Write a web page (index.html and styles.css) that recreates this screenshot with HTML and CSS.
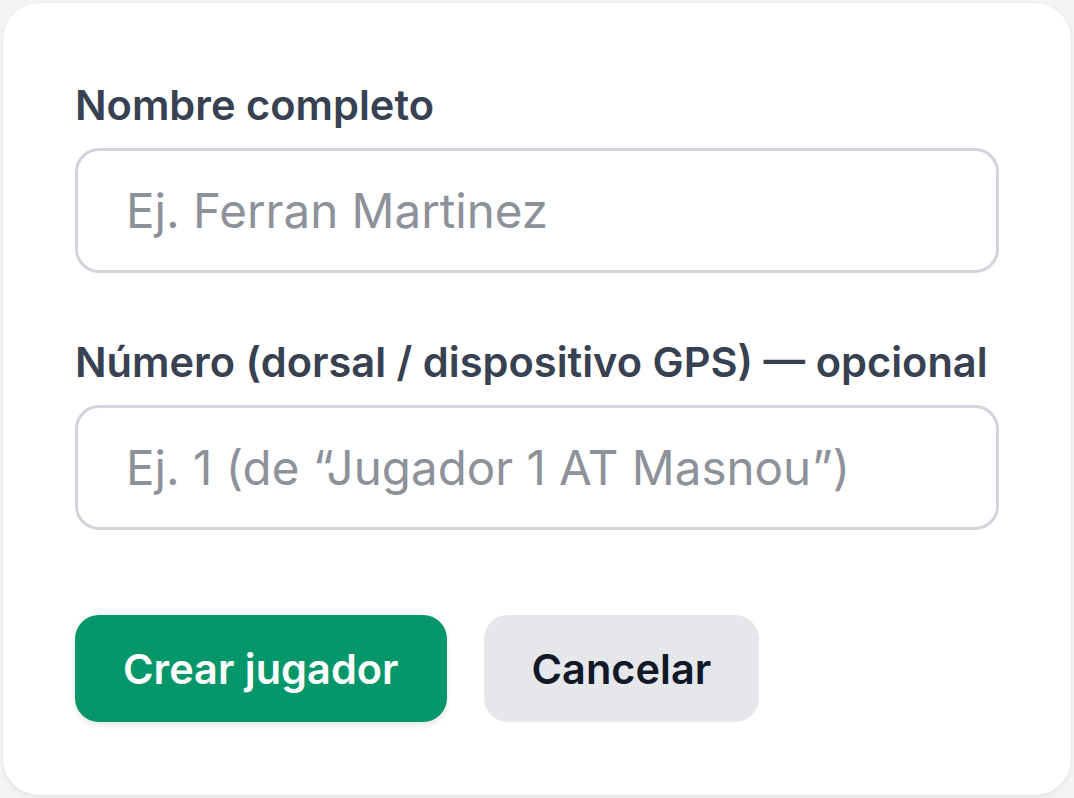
FILE: index.html
```html
<!DOCTYPE html>
<html>
<head>
    <title>Nuevo jugador</title>
    <meta name="viewport" content="width=device-width, initial-scale=1">
    <link rel="stylesheet" href="styles.css">
</head>
<body>
    <div class="card">
        <form class="player-form" onsubmit="return false">
            <div class="field">
                <label class="field-label" for="player-name">Nombre completo</label>
                <input class="field-input" id="player-name" type="text" placeholder="Ej. Ferran Martinez">
            </div>

            <div class="field">
                <label class="field-label" for="player-number">Número (dorsal / dispositivo GPS) — opcional</label>
                <input class="field-input" id="player-number" type="text" placeholder="Ej. 1 (de “Jugador 1 AT Masnou”)">
            </div>

            <div class="actions">
                <button class="btn btn-primary" type="submit">Crear jugador</button>
                <button class="btn btn-secondary" type="button">Cancelar</button>
            </div>
        </form>
    </div>
</body>
</html>
```

FILE: styles.css
```css
* {
    box-sizing: border-box;
}
body {
    font-family: Inter, "Noto Sans", sans-serif;
    margin: 0;
    padding: 3px;
    background: #f3f4f6;
    color: #374151;
}
.card {
    background: white;
    border-radius: 36px;
    box-shadow: 0 3px 6px rgba(0,0,0,0.06), 0 0 0 1px rgba(0,0,0,0.02);
    padding: 72px;
    min-height: 792px;
}
.player-form {
    display: flex;
    flex-direction: column;
}
.field {
    display: flex;
    flex-direction: column;
    gap: 13px;
    margin-bottom: 59px;
}
.field + .field {
    margin-bottom: 85px;
}
.field-label {
    font-size: 41.6px;
    line-height: 60px;
    font-weight: 600;
    color: #374151;
}
.field-input {
    height: 125px;
    border: 3px solid #d1d5db;
    border-radius: 24px;
    padding: 0 48px;
    font-family: inherit;
    font-size: 47.5px;
    color: #111827;
    background: white;
    outline: none;
}
.field-input::placeholder {
    color: #8d9199;
}
.actions {
    display: flex;
    gap: 37px;
}
.btn {
    height: 107px;
    padding: 0 48px;
    border: none;
    border-radius: 24px;
    font-family: inherit;
    font-size: 41.5px;
    font-weight: 600;
    cursor: pointer;
}
.btn-primary {
    background: #059669;
    color: white;
    box-shadow: 0 3px 6px rgba(0,0,0,0.1);
}
.btn-secondary {
    background: #e5e7eb;
    color: #111827;
}
```
